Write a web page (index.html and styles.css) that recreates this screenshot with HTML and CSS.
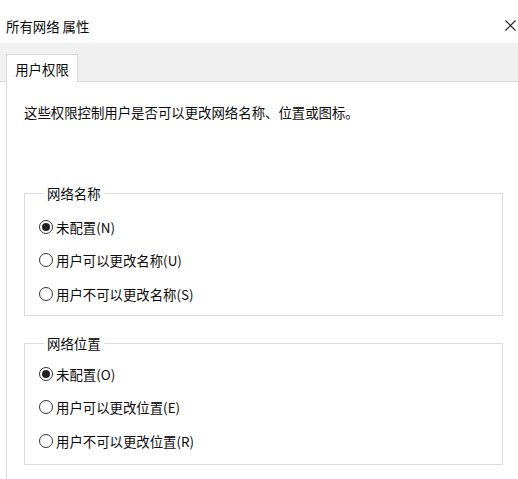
FILE: index.html
```html
<!DOCTYPE html>
<html lang="zh-CN">
<head>
<meta charset="utf-8">
<title>所有网络 属性</title>
<link rel="stylesheet" href="styles.css">
</head>
<body>
<div class="dialog">
  <div class="titlebar">
    <span class="title">所有网络 属性</span>
    <svg class="close" width="11" height="11" viewBox="0 0 11 11"><path d="M0.5 0.5L10.5 10.5M10.5 0.5L0.5 10.5" stroke="#222" stroke-width="1.1" fill="none"/></svg>
  </div>
  <div class="tabband">
    <div class="tab">用户权限</div>
  </div>
  <div class="page">
    <p class="desc">这些权限控制用户是否可以更改网络名称、位置或图标。</p>
    <fieldset class="group g1">
      <legend>网络名称</legend>
      <label class="radio"><span class="dot checked"></span>未配置(N)</label>
      <label class="radio"><span class="dot"></span>用户可以更改名称(U)</label>
      <label class="radio"><span class="dot"></span>用户不可以更改名称(S)</label>
    </fieldset>
    <fieldset class="group g2">
      <legend>网络位置</legend>
      <label class="radio"><span class="dot checked"></span>未配置(O)</label>
      <label class="radio"><span class="dot"></span>用户可以更改位置(E)</label>
      <label class="radio"><span class="dot"></span>用户不可以更改位置(R)</label>
    </fieldset>
  </div>
</div>
</body>
</html>
```
FILE: styles.css
```css
html, body {
  margin: 0;
  padding: 0;
  background: #ffffff;
}
body {
  font-family: "Noto Sans CJK SC", "Microsoft YaHei", sans-serif;
  font-size: 13.4px;
  color: #0a0a0a;
  width: 518px;
  height: 479px;
  overflow: hidden;
}
.dialog {
  display: flex;
  flex-direction: column;
}
.titlebar {
  height: 43px;
  display: flex;
  align-items: center;
  justify-content: space-between;
  padding: 8px 0 0 6px;
  box-sizing: border-box;
}
.title {
  line-height: 20px;
}
.close {
  margin-right: 2px;
}
.tabband {
  height: 39px;
  background: #f0f0f0;
  border-bottom: 1px solid #dadada;
  box-sizing: border-box;
  display: flex;
  align-items: flex-end;
  padding-left: 6px;
}
.tab {
  width: 72px;
  height: 28px;
  box-sizing: border-box;
  background: #fff;
  border: 1px solid #dadada;
  border-bottom: none;
  margin-bottom: -1px;
  display: flex;
  align-items: center;
  justify-content: center;
  padding-top: 1px;
}
.page {
  margin-left: 6px;
  border-left: 1px solid #dadada;
  padding: 20px 0 0 17px;
  height: 400px;
  box-sizing: border-box;
}
.desc {
  margin: 0;
  line-height: 20px;
}
.group {
  margin: 0;
  width: 479px;
  box-sizing: border-box;
  border: 1px solid #dcdcdc;
  padding: 8px 0 0 14px;
  display: flex;
  flex-direction: column;
}
.g1 {
  margin-top: 62px;
  height: 132px;
}
.g2 {
  margin-top: 18px;
  height: 131px;
  padding-top: 5px;
}
.group legend {
  padding: 0 3px;
  margin-left: 5px;
  line-height: 18px;
}
.radio {
  display: flex;
  align-items: center;
  flex: none;
  height: 33.5px;
  gap: 3px;
}
.dot {
  width: 14px;
  height: 14px;
  box-sizing: border-box;
  border: 1px solid #333;
  border-radius: 50%;
  display: flex;
  align-items: center;
  justify-content: center;
}
.dot.checked::after {
  content: "";
  width: 8px;
  height: 8px;
  border-radius: 50%;
  background: #222;
}
```
